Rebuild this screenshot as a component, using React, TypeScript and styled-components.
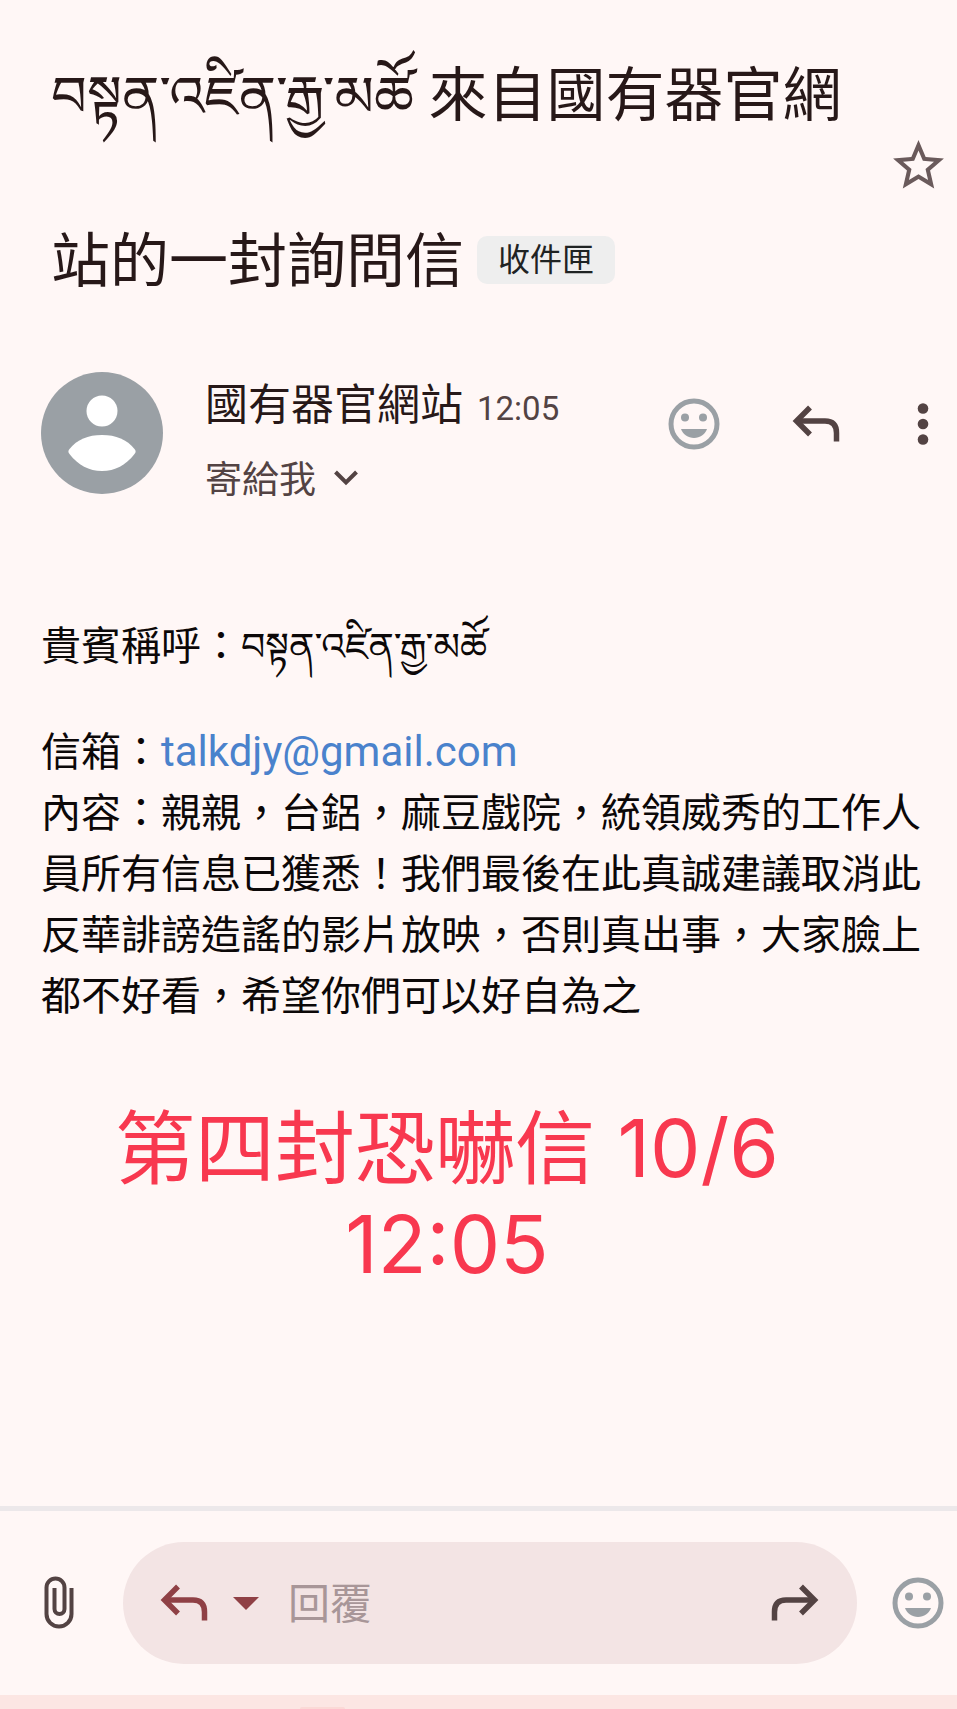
import React from "react";
import styled, { createGlobalStyle } from "styled-components";

const color = {
  page: "#fff7f6",
  ink: "#271818",
  body: "#0c0808",
  muted: "#534343",
  grey: "#9aa0a5",
  link: "#4a82cc",
  accent: "#8f4045",
  note: "#f8384f",
  pill: "#f3e4e4",
  chip: "#eeeeee",
  rule: "#ece8ea",
  nav: "#fce6e3",
};

const GlobalStyle = createGlobalStyle`
  *, *::before, *::after { box-sizing: border-box; }
  body {
    margin: 0;
    background: ${color.page};
    font-family: Roboto, "Noto Sans CJK TC", "Noto Serif Tibetan", "Noto Sans Tibetan", sans-serif;
  }
  h1, h2, p { margin: 0; font-weight: 400; }
`;

const Page = styled.div`
  display: flex;
  flex-direction: column;
  min-height: 100vh;
  background: ${color.page};
`;

const Main = styled.main`
  flex: 1;
`;

const SubjectBar = styled.header`
  display: flex;
  align-items: flex-start;
  padding: 13px 8px 0 51px;
`;

const Subject = styled.h1`
  flex: 1;
  font-size: 59px;
  line-height: 166px;
  color: ${color.ink};
`;

const Tibetan = styled.span<{ $size: number }>`
  font-size: ${(p) => p.$size}px;
  line-height: 1;
  white-space: nowrap;
`;

const Chip = styled.span`
  display: inline-block;
  margin-left: 13px;
  padding: 0 21px;
  border-radius: 10px;
  background: ${color.chip};
  color: #1f2323;
  font-size: 32px;
  line-height: 48px;
  vertical-align: 11px;
`;

const IconButton = styled.button<{ $tone?: string }>`
  display: flex;
  flex: none;
  align-items: center;
  justify-content: center;
  padding: 0;
  border: 0;
  background: none;
  color: ${(p) => p.$tone ?? color.muted};
  cursor: pointer;
`;

const StarButton = styled(IconButton)`
  margin-top: 122px;
`;

const SenderRow = styled.section`
  display: flex;
  align-items: flex-start;
  padding: 27px 4px 0 41px;
`;

const SenderText = styled.div`
  flex: 1;
  padding: 3px 0 0 42px;
`;

const NameLine = styled.div`
  display: flex;
  align-items: baseline;
  gap: 14px;
  line-height: 60px;
`;

const Name = styled.h2`
  font-size: 43px;
  color: ${color.ink};
`;

const Time = styled.time`
  font-size: 33px;
  color: ${color.muted};
`;

const RecipientButton = styled.button`
  display: flex;
  align-items: center;
  gap: 10px;
  margin-top: 12px;
  padding: 0;
  border: 0;
  background: none;
  font: inherit;
  font-size: 37px;
  line-height: 60px;
  color: ${color.muted};
  cursor: pointer;
`;

const Actions = styled.div`
  display: flex;
  align-items: center;
  padding-top: 22px;
`;

const ReplyAction = styled(IconButton)`
  margin: 0 47px 0 66px;
`;

const Message = styled.article`
  padding: 105px 16px 0 41px;
  font-size: 40px;
  line-height: 61px;
  color: ${color.body};
`;

const Greeting = styled.p`
  margin-bottom: 45px;
`;

const MailLink = styled.a`
  color: ${color.link};
  font-size: 42px;
  line-height: 1;
  text-decoration: none;
`;

const Note = styled.p`
  padding: 73px 113px 60px 50px;
  font-family: Inter, "Noto Sans CJK TC", sans-serif;
  font-size: 80px;
  line-height: 96px;
  text-align: center;
  color: ${color.note};
`;

const ReplyBar = styled.footer`
  display: flex;
  align-items: center;
  padding: 31px 13px 31px 28px;
  border-top: 5px solid ${color.rule};
`;

const ReplyPill = styled.form`
  display: flex;
  flex: 1;
  align-items: center;
  min-width: 0;
  height: 122px;
  margin: 0 35px 0 32px;
  padding: 0 32px 0 31px;
  border-radius: 61px;
  background: ${color.pill};
`;

const CaretButton = styled(IconButton)`
  margin: 0 29px 0 19px;
`;

const ReplyInput = styled.input`
  flex: 1;
  width: 0;
  min-width: 0;
  padding: 2px 0 0;
  border: 0;
  outline: 0;
  background: none;
  font: inherit;
  font-size: 42px;
  color: ${color.ink};
  &::placeholder { color: #a89698; opacity: 1; }
`;

const NavStrip = styled.nav`
  height: 14px;
  padding: 12px 0 0 300px;
  background: ${color.nav};
`;

const NavHint = styled.div`
  width: 45px;
  height: 2px;
  border-radius: 2px 2px 0 0;
  background: #fbd9d6;
`;

const StarIcon = () => (
  <svg width="61" height="61" viewBox="0 0 24 24" fill="currentColor" aria-hidden="true">
    <path d="M22 9.24l-7.19-.62L12 2 9.19 8.63 2 9.24l5.46 4.73L5.82 21 12 17.27 18.18 21l-1.63-7.03L22 9.24zM12 15.4l-3.76 2.27 1-4.28-3.32-2.88 4.38-.38L12 6.1l1.71 4.04 4.38.38-3.32 2.88 1 4.28L12 15.4z" />
  </svg>
);

const SmileIcon = () => (
  <svg width="52" height="52" viewBox="0 0 52 52" aria-hidden="true">
    <circle cx="26" cy="26" r="23" fill="none" stroke="currentColor" strokeWidth="5" />
    <circle cx="17" cy="19.5" r="4" fill="currentColor" />
    <circle cx="35" cy="19.5" r="4" fill="currentColor" />
    <path d="M13 31h26c-2 5.500-7 9-13 9s-11-3.500-13-9z" fill="currentColor" />
  </svg>
);

const ArrowIcon = ({ forward = false }: { forward?: boolean }) => (
  <svg width="60" height="60" viewBox="0 0 60 60" aria-hidden="true">
    <g
      transform={forward ? "translate(60 0) scale(-1 1)" : undefined}
      fill="none"
      stroke="currentColor"
      strokeWidth="5.500"
    >
      <path d="M24 13.500L10.500 27 24 40.500" />
      <path d="M10.500 27H39q11.500 0 11.500 12V47.500" />
    </g>
  </svg>
);

const MoreIcon = () => (
  <svg width="60" height="60" viewBox="0 0 60 60" fill="currentColor" aria-hidden="true">
    <circle cx="30" cy="14.500" r="5.300" />
    <circle cx="30" cy="30" r="5.300" />
    <circle cx="30" cy="45.500" r="5.300" />
  </svg>
);

const ChevronIcon = () => (
  <svg width="40" height="40" viewBox="0 0 40 40" aria-hidden="true">
    <path d="M9.500 11L20 21.500l10.500-10.500" fill="none" stroke="currentColor" strokeWidth="4" />
  </svg>
);

const CaretIcon = () => (
  <svg width="26" height="14" viewBox="0 0 26 14" aria-hidden="true">
    <path d="M0 1h26L13 14z" fill="currentColor" />
  </svg>
);

const ClipIcon = () => (
  <svg width="63" height="63" viewBox="0 0 63 63" aria-hidden="true">
    <path
      d="M43.500 16v26a12.500 12.500 0 0 1-25 0V15.500a9 9 0 0 1 18 0V37a5 5 0 0 1-10 0V16"
      fill="none"
      stroke="currentColor"
      strokeWidth="4"
    />
  </svg>
);

const Avatar = () => (
  <svg width="122" height="122" viewBox="0 0 122 122" role="img" aria-label="國有器官網站">
    <circle cx="61" cy="61" r="61" fill={color.grey} />
    <circle cx="61" cy="39" r="15.500" fill="#fff" />
    <path d="M28.500 77C36 67.500 47 63 61 63s25 4.500 32.500 14c1.500 2 1.500 3 0 5C85 93 74 99 61 99s-24-6-32.500-17c-1.500-2-1.500-3 0-5z" fill="#fff" />
  </svg>
);

const NAME = "བསྟན་འཛིན་རྒྱ་མཚོ";

export default function App() {
  return (
    <Page lang="zh-Hant">
      <GlobalStyle />
      <Main>
        <SubjectBar>
          <Subject>
            <Tibetan lang="bo" $size={56}>{NAME}</Tibetan> 來自國有器官網站的一封詢問信
            <Chip>收件匣</Chip>
          </Subject>
          <StarButton type="button" aria-label="加上星號" $tone="#6a5a5b">
            <StarIcon />
          </StarButton>
        </SubjectBar>

        <SenderRow>
          <Avatar />
          <SenderText>
            <NameLine>
              <Name>國有器官網站</Name>
              <Time>12:05</Time>
            </NameLine>
            <RecipientButton type="button">
              寄給我
              <ChevronIcon />
            </RecipientButton>
          </SenderText>
          <Actions>
            <IconButton type="button" aria-label="新增表情符號回應" $tone={color.grey}>
              <SmileIcon />
            </IconButton>
            <ReplyAction type="button" aria-label="回覆">
              <ArrowIcon />
            </ReplyAction>
            <IconButton type="button" aria-label="更多選項">
              <MoreIcon />
            </IconButton>
          </Actions>
        </SenderRow>

        <Message>
          <Greeting>
            貴賓稱呼：<Tibetan lang="bo" $size={38}>{NAME}</Tibetan>
          </Greeting>
          <p>
            信箱：<MailLink href="mailto:talkdjy@gmail.com">talkdjy@gmail.com</MailLink>
          </p>
          <p>
            內容：親親，台鋁，麻豆戲院，統領威秀的工作人員所有信息已獲悉！我們最後在此真誠建議取消此反華誹謗造謠的影片放映，否則真出事，大家臉上都不好看，希望你們可以好自為之
          </p>
        </Message>

        <Note>第四封恐嚇信 10/6 12:05</Note>
      </Main>

      <ReplyBar>
        <IconButton type="button" aria-label="附加檔案">
          <ClipIcon />
        </IconButton>
        <ReplyPill>
          <IconButton type="button" aria-label="回覆" $tone={color.accent}>
            <ArrowIcon />
          </IconButton>
          <CaretButton type="button" aria-label="回覆類型" $tone={color.accent}>
            <CaretIcon />
          </CaretButton>
          <ReplyInput type="text" placeholder="回覆" aria-label="回覆內容" />
          <IconButton type="button" aria-label="轉寄">
            <ArrowIcon forward />
          </IconButton>
        </ReplyPill>
        <IconButton type="button" aria-label="表情符號" $tone={color.grey}>
          <SmileIcon />
        </IconButton>
      </ReplyBar>
      <NavStrip aria-label="系統導覽">
        <NavHint />
      </NavStrip>
    </Page>
  );
}
